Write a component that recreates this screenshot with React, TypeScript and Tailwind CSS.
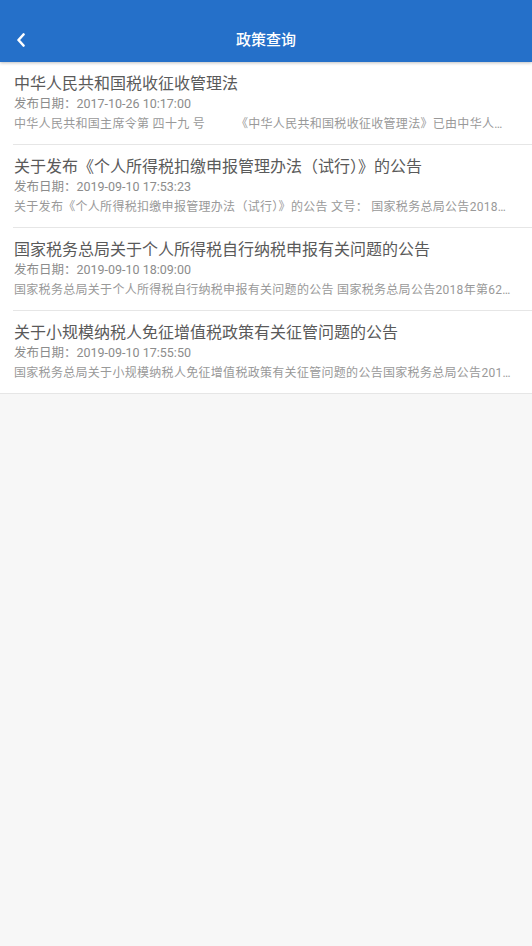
import React from "react";

type Policy = {
  title: string;
  date: string;
  summary: string;
};

const policies: Policy[] = [
  {
    title: "中华人民共和国税收征收管理法",
    date: "2017-10-26 10:17:00",
    summary:
      "中华人民共和国主席令第 四十九 号　　　《中华人民共和国税收征收管理法》已由中华人民共和国第九届全国人民代表大会常务委员会第二十一次会议",
  },
  {
    title: "关于发布《个人所得税扣缴申报管理办法（试行）》的公告",
    date: "2019-09-10 17:53:23",
    summary:
      "关于发布《个人所得税扣缴申报管理办法（试行）》的公告 文号： 国家税务总局公告2018年第61号",
  },
  {
    title: "国家税务总局关于个人所得税自行纳税申报有关问题的公告",
    date: "2019-09-10 18:09:00",
    summary:
      "国家税务总局关于个人所得税自行纳税申报有关问题的公告 国家税务总局公告2018年第62号文",
  },
  {
    title: "关于小规模纳税人免征增值税政策有关征管问题的公告",
    date: "2019-09-10 17:55:50",
    summary:
      "国家税务总局关于小规模纳税人免征增值税政策有关征管问题的公告国家税务总局公告2019年第4号",
  },
];

const App = () => {
  return (
    <div
      className="min-h-[946px] bg-[#f7f7f7]"
      style={{ fontFamily: "Roboto, 'Noto Sans CJK SC', sans-serif" }}
    >
      <header className="relative z-10 h-[62px] bg-[#2570c9] shadow-[0_1px_3px_rgba(0,0,0,0.25)]">
        <div className="flex h-full items-end pb-[8px]">
          <div className="flex h-[28px] w-full items-center">
            <button className="flex h-full w-[40px] items-center justify-center pl-[1px]">
              <svg width="10" height="14" viewBox="0 0 10 14">
                <polyline
                  points="7.5,1.5 2.5,7 7.5,12.5"
                  fill="none"
                  stroke="#fff"
                  strokeWidth="2.6"
                  strokeLinecap="round"
                  strokeLinejoin="round"
                />
              </svg>
            </button>
            <h1 className="flex-1 pr-[40px] text-center text-[15px] font-medium text-white">
              政策查询
            </h1>
          </div>
        </div>
      </header>

      <ul className="border-b border-[#e6e6e6] bg-white">
        {policies.map((p, i) => (
          <li
            key={p.title}
            className={
              i < policies.length - 1
                ? "ml-[13px] border-b border-[#e6e6e6] pb-[10px] pr-[18px] pt-[12px]"
                : "ml-[13px] pb-[10px] pr-[18px] pt-[12px]"
            }
          >
            <h2 className="truncate pl-[1px] text-[16px] leading-[20px] text-[#5a5a5a]">
              {p.title}
            </h2>
            <p className="pl-[1px] text-[12.5px] leading-[20px] text-[#8c8c8c]">
              发布日期：{p.date}
            </p>
            <p className="truncate pl-[1px] text-[12px] leading-[20px] tracking-[0.3px] text-[#999]">
              {p.summary}
            </p>
          </li>
        ))}
      </ul>
    </div>
  );
};

export default App;
